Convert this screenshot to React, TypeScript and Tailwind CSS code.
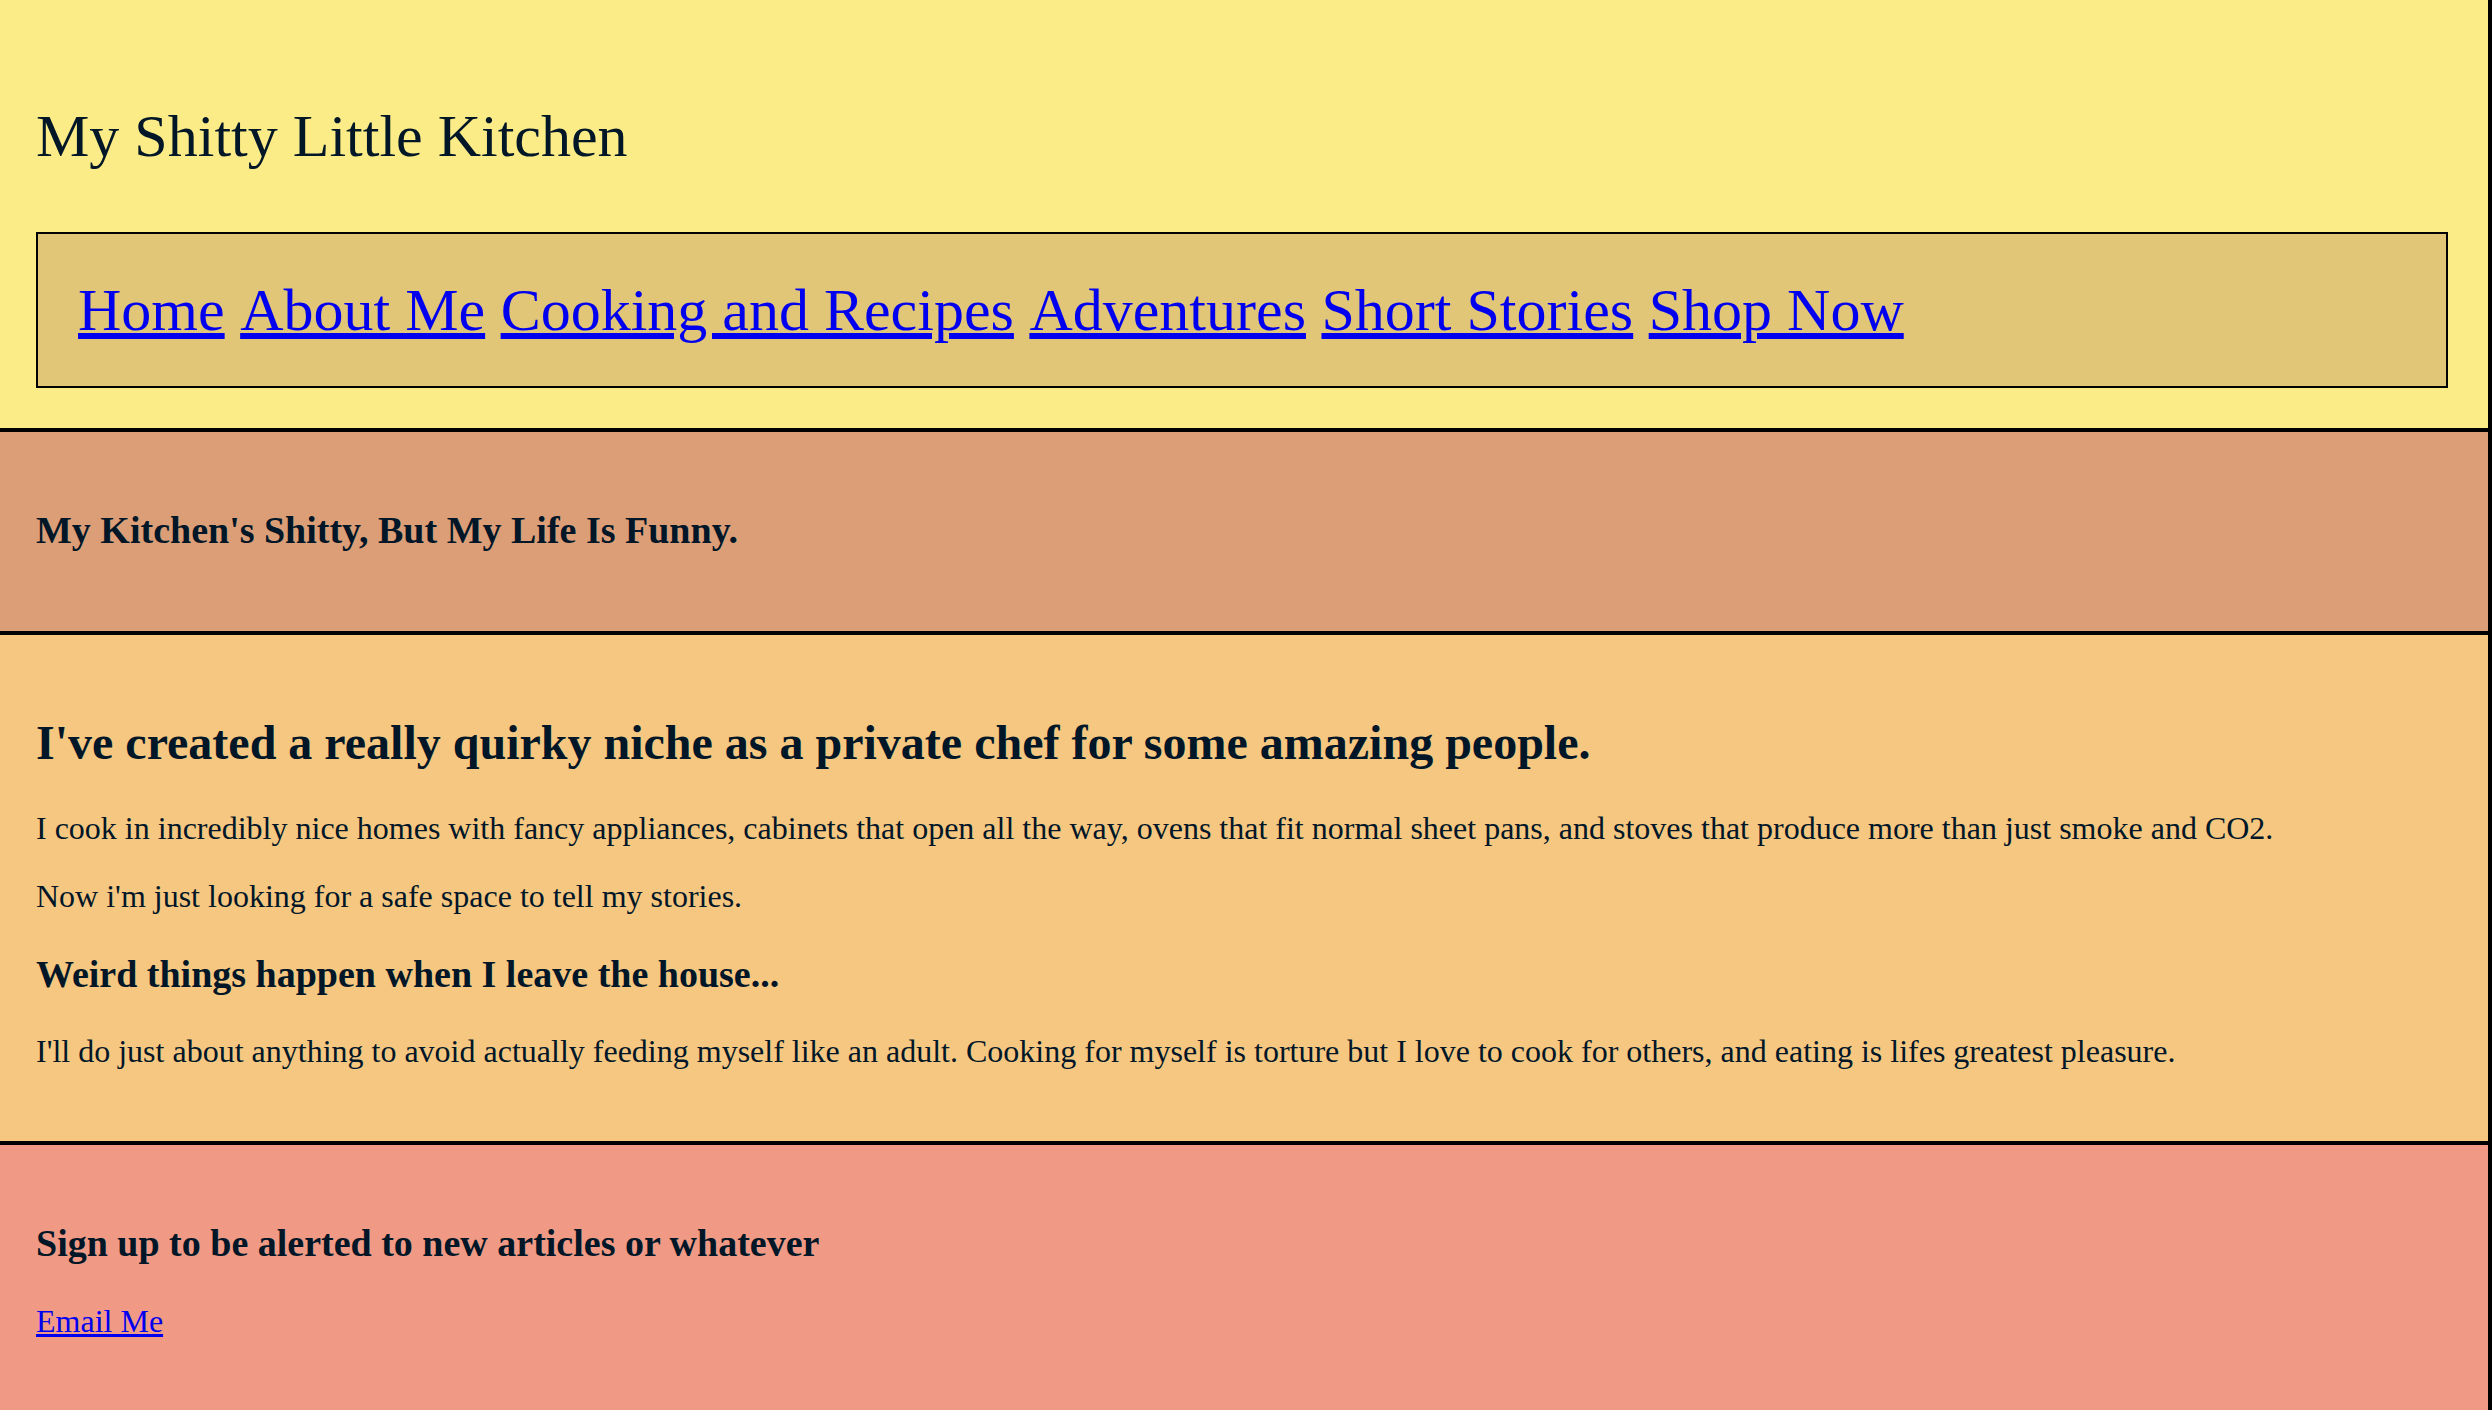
export default function App() {
  const links = ["Home", "About Me", "Cooking and Recipes", "Adventures", "Short Stories", "Shop Now"];

  return (
    <div className="min-h-screen flex flex-col font-['Liberation_Serif','Times_New_Roman',serif] text-[#011627]">
      {/* header */}
      <header className="bg-[#FCEC87] border-r-4 border-b-4 border-black pt-[102px] pb-[40px] pl-[36px] pr-[40px]">
        <h1 className="text-[60px] leading-[69px] font-normal">My Shitty Little Kitchen</h1>
        <nav className="mt-[61px] border-2 border-black bg-[#E2C677] pl-[40px] pt-[42px] pb-[41px] text-[60px] leading-[69px] whitespace-nowrap">
          {links.map((l, i) => (
            <span key={l}>
              <a href="#" className={i > 0 ? "ml-[0.5px] text-[#0000EE] underline" : "text-[#0000EE] underline"}>
                {l}
              </a>
              {i < links.length - 1 ? " " : ""}
            </span>
          ))}
        </nav>
      </header>

      {/* tagline */}
      <section className="bg-[#DC9E77] border-r-4 border-b-4 border-black pt-[40px] pb-[41px] pl-[36px] pr-[40px]">
        <h3 className="my-[37.44px] text-[38px] leading-[43px] font-bold">
          My Kitchen's Shitty, But My Life Is Funny.
        </h3>
      </section>

      {/* about */}
      <section className="bg-[#F6C781] border-r-4 border-b-4 border-black pt-[40px] pb-[39px] pl-[36px] pr-[40px]">
        <h2 className="my-[39.84px] text-[48px] leading-[1.149] font-bold">
          I've created a really quirky niche as a private chef for some amazing people.
        </h2>
        <p className="my-[32px] text-[32px] leading-[1.149]">
          I cook in incredibly nice homes with fancy appliances, cabinets that open all the way, ovens that fit normal sheet pans, and stoves that produce more than just smoke and CO2.
        </p>
        <p className="my-[32px] text-[32px] leading-[1.149]">Now i'm just looking for a safe space to tell my stories.</p>
        <h3 className="my-[37.44px] text-[38px] leading-[43px] font-bold">Weird things happen when I leave the house...</h3>
        <p className="my-[32px] text-[32px] leading-[1.149]">
          I'll do just about anything to avoid actually feeding myself like an adult. Cooking for myself is torture but I love to cook for others, and eating is lifes greatest pleasure.
        </p>
      </section>

      {/* signup */}
      <section className="flex-1 bg-[#F09A85] border-r-4 border-black pt-[40px] pb-[40px] pl-[36px] pr-[40px]">
        <h3 className="my-[37.44px] text-[38px] leading-[43px] font-bold">
          Sign up to be alerted to new articles or whatever
        </h3>
        <p className="my-[32px] text-[32px] leading-[1.149]">
          <a href="#" className="text-[#0000EE] underline">
            Email Me
          </a>
        </p>
      </section>
    </div>
  );
}
